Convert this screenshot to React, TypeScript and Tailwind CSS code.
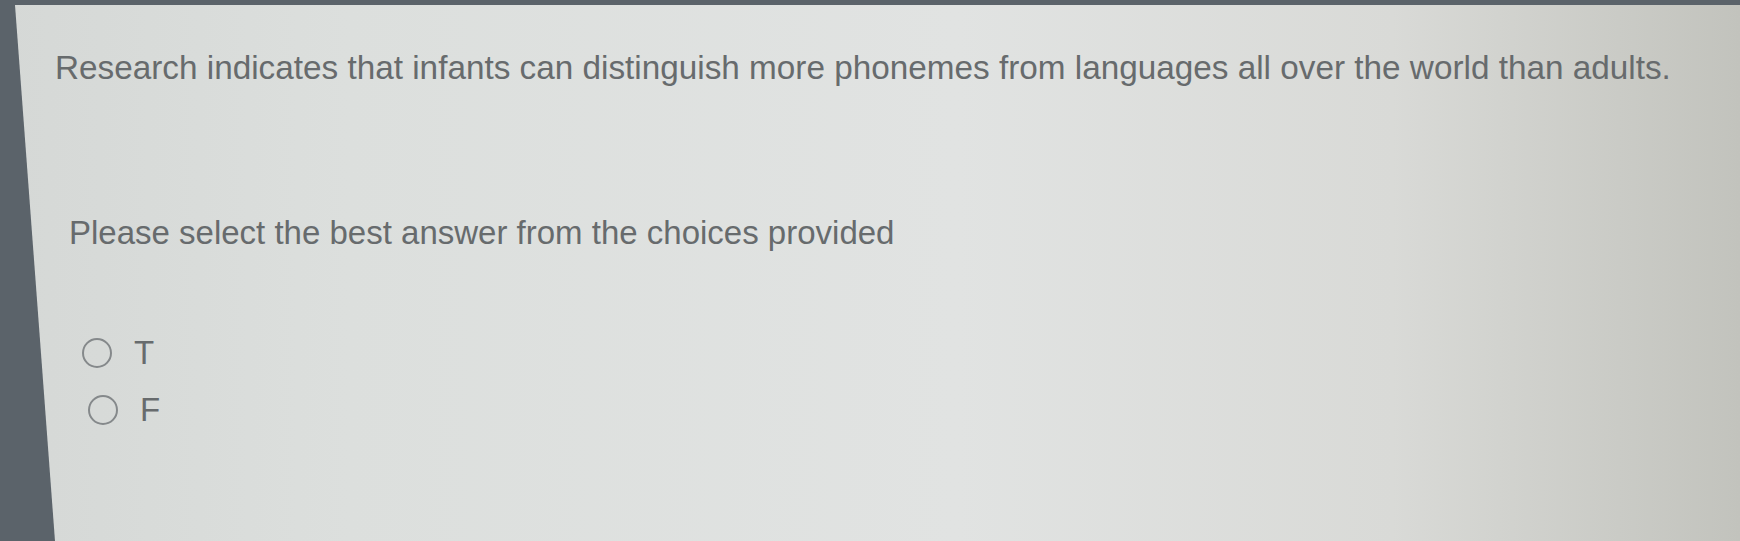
import { useState } from "react";

const QUESTION =
  "Research indicates that infants can distinguish more phonemes from languages all over the world than adults.";

const CHOICES = ["T", "F"];

export default function App() {
  const [answer, setAnswer] = useState<string | null>(null);

  return (
    <div className="h-[541px] w-[1740px] overflow-hidden bg-[#5b636a]">
      {/* screen panel, edge skewed by the bezel */}
      <div
        className="h-full w-full bg-[linear-gradient(90deg,#d5d8d6_0%,#dcdfdd_20%,#e1e3e2_55%,#d9dad7_80%,#c2c3bd_100%)] pt-[46px] pl-[55px] text-[#676b6d] [clip-path:polygon(15px_5px,100%_5px,100%_100%,55px_100%)]"
        style={{ fontFamily: '"Liberation Sans", Arial, sans-serif' }}
      >
        <p className="text-[33.3px] leading-[44px]">{QUESTION}</p>

        <p className="mt-[121px] pl-[14px] text-[33px] leading-[44px]">
          Please select the best answer from the choices provided
        </p>

        <div className="mt-[83px] flex flex-col gap-[27px] pl-[27px]">
          {CHOICES.map((c, i) => (
            <label
              key={c}
              className={`flex cursor-pointer items-center gap-[22px] ${i === 1 ? "pl-[6px]" : ""}`}
              onClick={() => setAnswer(c)}
            >
              <span className="flex h-[30px] w-[30px] items-center justify-center rounded-full border-2 border-[#85898b]">
                {answer === c && <span className="h-[14px] w-[14px] rounded-full bg-[#676b6d]" />}
              </span>
              <span className="text-[33px] leading-[30px]">{c}</span>
            </label>
          ))}
        </div>
      </div>
    </div>
  );
}
